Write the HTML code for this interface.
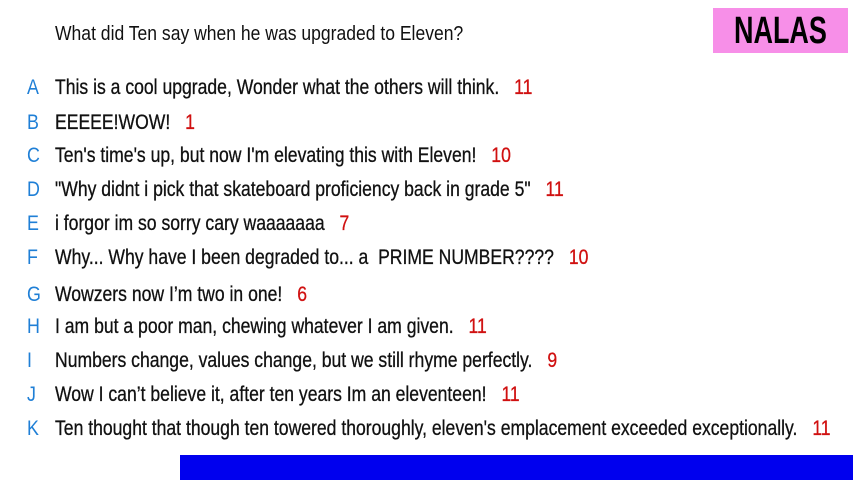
<!DOCTYPE html>
<html><head><meta charset="utf-8"><style>
body{margin:0;width:853px;height:480px;background:#fff;position:relative;overflow:hidden;font-family:"Liberation Sans",sans-serif;color:#111}
.r{position:absolute;left:0;font-size:21px;line-height:22px;white-space:nowrap}
.l{position:absolute;left:27px;color:#1f7fd6;transform:scaleX(0.85);transform-origin:left}
.t{position:absolute;left:55px;transform:scaleX(0.837);transform-origin:left;-webkit-text-stroke:0.3px #111}
.n{color:#d01010;margin-left:12px;-webkit-text-stroke:0.3px #d01010}
#title{position:absolute;left:55px;top:23px;font-size:20px;white-space:nowrap;transform:scaleX(0.877);transform-origin:left}
#nalas{position:absolute;left:713px;top:8px;width:135px;height:45px;background:#f78fe8;text-align:center;line-height:46px;color:#000}
#nalas span{display:inline-block;font-size:38px;font-weight:bold;transform:scaleX(0.71)}
#bar{position:absolute;left:180px;top:455px;width:673px;height:25px;background:#0000ee}
</style></head><body>
<div id="title">What did Ten say when he was upgraded to Eleven?</div>
<div id="nalas"><span>NALAS</span></div>
<div class="r" style="top:77px"><span class="l">A</span><span class="t">This is a cool upgrade, Wonder what the others will think. <span class="n">11</span></span></div>
<div class="r" style="top:112px"><span class="l">B</span><span class="t">EEEEE!WOW! <span class="n">1</span></span></div>
<div class="r" style="top:145px"><span class="l">C</span><span class="t">Ten's time's up, but now I'm elevating this with Eleven! <span class="n">10</span></span></div>
<div class="r" style="top:179px"><span class="l">D</span><span class="t">"Why didnt i pick that skateboard proficiency back in grade 5" <span class="n">11</span></span></div>
<div class="r" style="top:213px"><span class="l">E</span><span class="t">i forgor im so sorry cary waaaaaaa <span class="n">7</span></span></div>
<div class="r" style="top:247px"><span class="l">F</span><span class="t">Why... Why have I been degraded to... a &nbsp;PRIME NUMBER???? <span class="n">10</span></span></div>
<div class="r" style="top:284px"><span class="l">G</span><span class="t">Wowzers now I’m two in one! <span class="n">6</span></span></div>
<div class="r" style="top:316px"><span class="l">H</span><span class="t">I am but a poor man, chewing whatever I am given. <span class="n">11</span></span></div>
<div class="r" style="top:350px"><span class="l">I</span><span class="t">Numbers change, values change, but we still rhyme perfectly. <span class="n">9</span></span></div>
<div class="r" style="top:384px"><span class="l">J</span><span class="t">Wow I can’t believe it, after ten years Im an eleventeen! <span class="n">11</span></span></div>
<div class="r" style="top:418px"><span class="l">K</span><span class="t">Ten thought that though ten towered thoroughly, eleven's emplacement exceeded exceptionally. <span class="n">11</span></span></div>
<div id="bar"></div>
</body></html>
